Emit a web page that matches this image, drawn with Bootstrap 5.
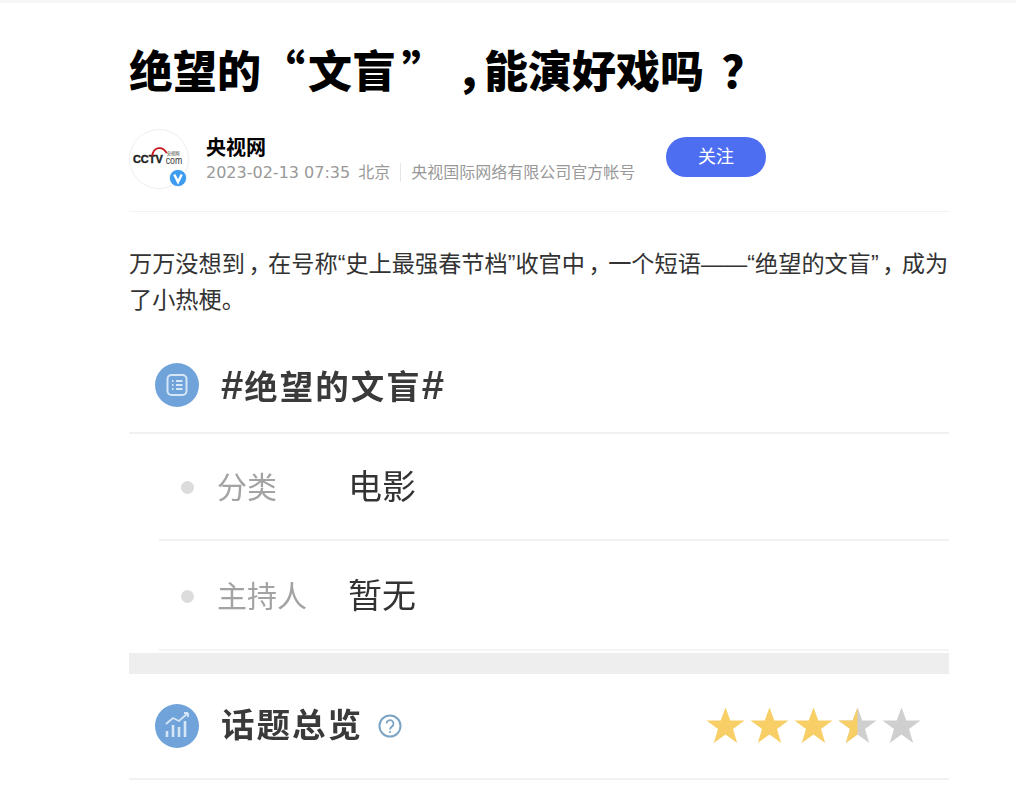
<!DOCTYPE html>
<html lang="zh">
<head>
<meta charset="utf-8">
<title>绝望的“文盲”，能演好戏吗？</title>
<link href="https://cdn.jsdelivr.net/npm/bootstrap@5.3.0/dist/css/bootstrap.min.css" rel="stylesheet">
<style>
html,body{height:808px;overflow:hidden}
body{font-family:"Liberation Sans","Noto Sans CJK SC",sans-serif;background:#fff;border-top:3px solid #f6f6f6;color:#333;text-spacing-trim:space-all}
.pagewrap{width:820px;margin-left:129px}
.headline{font-family:"Noto Sans CJK SC",sans-serif;font-size:44px;font-weight:900;line-height:60px;color:#000;margin:36px 0 0;white-space:nowrap}
.headopen{padding-right:3px}
.headclose{padding-left:6px}
.headcomma{font-feature-settings:"halt";padding:0 6px 0 10px}
.headask{font-feature-settings:"halt";padding-left:.4em}
.authorbar{height:89px;padding-top:6px;border-bottom:1px solid #f2f2f2;margin-top:24px}
.avatarwrap{position:relative;width:60px;height:60px;flex:none}
.avatarface{width:60px;height:60px;border:1px solid #eee;border-radius:50%}
.vmark{position:absolute;right:2px;bottom:2px;width:18px;height:18px}
.authorinfo{margin-left:17px;width:460px;flex:none}
.authorname{font-size:20px;font-weight:700;line-height:28px;color:#000;margin-top:5px}
.authormeta{font-size:16px;line-height:20px;color:#999;white-space:nowrap;margin-top:1px}
.metadate{font-family:"DejaVu Sans","Noto Sans CJK SC",sans-serif;margin-right:8px}
.metarule{display:inline-block;width:1px;height:19px;background:#e6e6e6;margin:0 10px 0 10px;vertical-align:-4px}
.followslot{padding-top:4px}
.followbtn{width:100px;height:40px;border-radius:20px;background:#4e6ef2;color:#fff;font-size:18px;line-height:38px;text-align:center;padding:0;border:0}
.followbtn:hover{background:#4e6ef2;color:#fff}
.articletext{font-size:23.2px;line-height:36px;color:#333;margin:34px 0 0}
.bodycomma{font-feature-settings:"halt";padding:0 .35em 0 .15em}
.shotbox{margin-top:29px;filter:blur(.5px);color:#333}
.shothead{height:87px;padding-left:26px;padding-bottom:9px;border-bottom:2px solid #f1f1f1}
.overviewhead{height:106px;padding-left:26px;padding-right:27px;border-bottom:2px solid #f1f1f1}
.circleicon{width:44px;height:44px;flex:none}
.shottitle{font-size:33.5px;font-weight:700;margin-left:22px;color:#3a3a3a;letter-spacing:2px}
.hashsign{font-size:40px;letter-spacing:1px}
.inforow{height:107px;margin-left:30px;padding-left:22px;padding-top:2px;border-bottom:2px solid #f1f1f1}
.inforow.lastrow{border-bottom-color:#f4f4f4;height:110px;padding-top:3px}
.rowdot{width:13px;height:13px;border-radius:50%;background:#dcdcdc;flex:none}
.rowkey{font-size:30px;color:#a3a3a3;width:131px;margin-left:23px;flex:none}
.rowval{font-size:34px;color:#333}
.greyband{height:21px;margin-top:2px;background:#eee}
.helpicon{width:24px;height:24px;margin-left:15px;flex:none}
.starset{margin-left:auto;width:216px;height:40px;flex:none}
</style>
</head>
<body>
<div class="pagewrap">
  <h1 class="headline">绝望的<span class="headopen">“</span>文盲<span class="headclose">”</span><span class="headcomma">，</span>能演好戏吗<span class="headask">？</span></h1>
  <div class="authorbar d-flex align-items-start">
    <div class="avatarwrap">
      <svg class="avatarface" viewBox="0 0 60 60">
        <text x="3" y="34" font-family="Liberation Sans" font-size="11.500" font-weight="700" fill="#222" stroke="#222" stroke-width=".4" textLength="31" lengthAdjust="spacingAndGlyphs">CCTV</text>
        <path d="M23 27c1-10 11-11 15-3" fill="none" stroke="#c8161d" stroke-width="1.800"/>
        <text x="37" y="35.500" font-family="Liberation Sans" font-size="11" fill="#333" textLength="17" lengthAdjust="spacingAndGlyphs">com</text>
        <text x="38" y="26" font-family="Noto Sans CJK SC" font-size="4.400" fill="#444">央视网</text>
      </svg>
      <svg class="vmark" viewBox="0 0 18 18"><circle cx="9" cy="9" r="8.600" fill="#3d9bf0" stroke="#fff" stroke-width=".8"/><path d="M5.300 5.500 9 13l3.700-7.500" fill="none" stroke="#fff" stroke-width="2.400"/></svg>
    </div>
    <div class="authorinfo">
      <div class="authorname">央视网</div>
      <div class="authormeta"><span class="metadate">2023-02-13 07:35</span>北京<span class="metarule"></span>央视国际网络有限公司官方帐号</div>
    </div>
    <div class="followslot mt-1 pt-0"><button class="btn followbtn mt-1" type="button">关注</button></div>
  </div>
  <p class="articletext">万万没想到<span class="bodycomma">，</span>在号称“史上最强春节档”收官中<span class="bodycomma">，</span>一个短语——“绝望的文盲”<span class="bodycomma">，</span>成为<br>了小热梗。</p>
  <div class="shotbox">
    <div class="shothead d-flex align-items-center">
      <svg class="circleicon" viewBox="0 0 44 44"><circle cx="22" cy="22" r="22" fill="#6fa3da"/><rect x="12.500" y="12" width="19" height="20" rx="4" fill="none" stroke="#d5e6f6" stroke-width="2"/><path d="M17 18h1.500M17 22h1.500M17 26h1.500M21 18h6.500M21 22h6.500M21 26h6.500" stroke="#d5e6f6" stroke-width="2"/></svg>
      <div class="shottitle"><span class="hashsign">#</span>绝望的文盲<span class="hashsign">#</span></div>
    </div>
    <div class="inforow d-flex align-items-center"><span class="rowdot"></span><span class="rowkey">分类</span><span class="rowval">电影</span></div>
    <div class="inforow lastrow d-flex align-items-center"><span class="rowdot"></span><span class="rowkey">主持人</span><span class="rowval">暂无</span></div>
    <div class="greyband"></div>
    <div class="overviewhead d-flex align-items-center">
      <svg class="circleicon" viewBox="0 0 44 44"><circle cx="22" cy="22" r="22" fill="#6fa3da"/><path d="M11 20 18 14l6 3 9-8M33 9v4M33 9h-4" fill="none" stroke="#d5e6f6" stroke-width="1.800"/><path d="M12 33v-6M18 33V21M24 33V23M30 33V17" stroke="#d5e6f6" stroke-width="2.600"/></svg>
      <div class="shottitle">话题总览</div>
      <svg class="helpicon" viewBox="0 0 24 24"><circle cx="12" cy="12" r="10.500" fill="none" stroke="#7aa3c4" stroke-width="2"/><path d="M8.500 9.500a3.500 3.500 0 1 1 5.500 3c-1.300 1-2 1.500-2 3" fill="none" stroke="#7aa3c4" stroke-width="1.800"/><circle cx="12" cy="18" r="1.100" fill="#7aa3c4"/></svg>
      <svg class="starset" viewBox="0 0 216 40">
        <defs><path id="starshape" d="M19.500 1.500 24.300 14.500H38.500L27 23 31.200 37 19.500 28.500 7.800 37 12 23 .5 14.500H14.700Z"/></defs>
        <use href="#starshape" fill="#f7cf66"/>
        <use href="#starshape" x="44" fill="#f7cf66"/>
        <use href="#starshape" x="88" fill="#f7cf66"/>
        <use href="#starshape" x="132" fill="#cfcfcf"/>
        <path d="M151.500 1.500V28.500L139.800 37 144 23 132.500 14.500H146.700Z" fill="#f7cf66"/>
        <use href="#starshape" x="176" fill="#cfcfcf"/>
      </svg>
    </div>
  </div>
</div>
<script src="https://cdn.jsdelivr.net/npm/bootstrap@5.3.0/dist/js/bootstrap.bundle.min.js"></script>
</body>
</html>
